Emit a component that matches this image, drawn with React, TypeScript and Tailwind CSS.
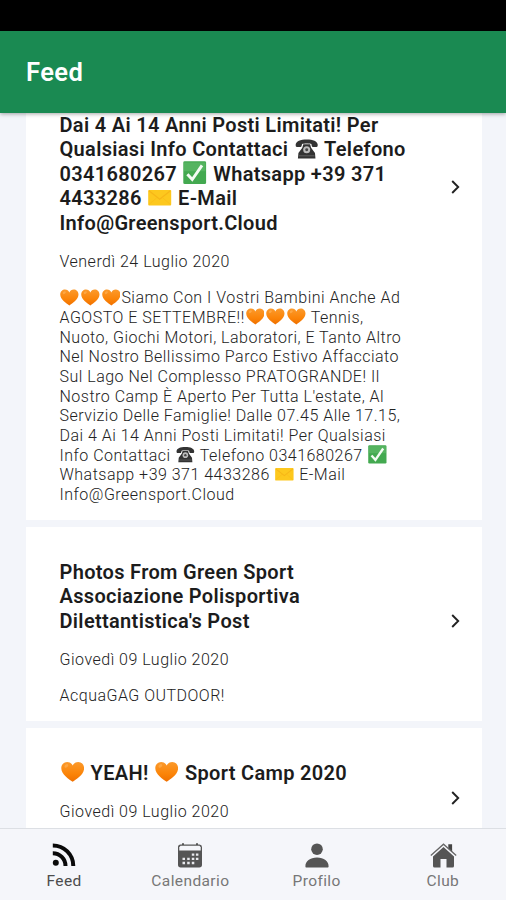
import type { ReactNode } from 'react';

const Heart = () => (
  <svg viewBox="0 0 24 24" className="inline-block w-[1.17em] h-[1.17em] mx-[0.06em] -my-[0.2em] align-baseline">
    <defs>
      <linearGradient id="heart" x1="0" y1="0" x2="0" y2="1">
        <stop offset="0" stopColor="#fb9a2c" />
        <stop offset="0.6" stopColor="#fb8408" />
        <stop offset="1" stopColor="#ef7000" />
      </linearGradient>
    </defs>
    <path fill="url(#heart)" d="M12 22.4C8 19.400.3 14.800.3 8.400.3 4.600 3.200 2 6.400 2c2.600 0 4.700 1.500 5.600 3.700C12.900 3.500 15 2 17.600 2c3.200 0 6.100 2.600 6.100 6.400 0 6.400-7.700 11-11.700 14z" />
    <ellipse cx="5.500" cy="6" rx="2.200" ry="1.500" transform="rotate(-40 5.500 6)" fill="#ffb45c" opacity="0.6" />
  </svg>
);

const Check = () => (
  <svg viewBox="0 0 24 24" className="inline-block w-[1.17em] h-[1.17em] mx-[0.06em] -my-[0.2em] align-baseline">
    <rect x="0.300" y="0.300" width="23.400" height="23.400" rx="1.500" fill="#43a950" />
    <path d="M1 1.500h22v9H1z" fill="#62bd6b" opacity="0.6" />
    <path d="M4.500 13.500l5 5.500L19.500 4.500" fill="none" stroke="#f4fbf4" strokeWidth="3" />
  </svg>
);

const Mail = () => (
  <svg viewBox="0 0 24 24" className="inline-block w-[1.17em] h-[1.17em] mx-[0.06em] -my-[0.2em] align-baseline">
    <rect x="0.200" y="4" width="23.600" height="16" rx="1" fill="#fdc81e" />
    <path d="M1 5l11 8.500L23 5" fill="none" stroke="#f7b618" strokeWidth="1.300" />
    <path d="M1 19l8-7M23 19l-8-7" fill="none" stroke="#fabd18" strokeWidth="0.800" />
  </svg>
);

const Phone = () => (
  <svg viewBox="0 0 24 24" className="inline-block w-[1.17em] h-[1.17em] mx-[0.06em] -my-[0.2em] align-baseline">
    <path fill="#333" d="M12 2.500c6.500 0 11 2 11.300 5.200.1 1.700-.3 2.600-1.300 2.600h-3.600c-1.200 0-1.300-1.500-1.600-3C15 6.500 9 6.500 7.200 7.300c-.3 1.500-.4 3-1.600 3H2C1 10.300.6 9.400.7 7.700 1 4.500 5.500 2.500 12 2.500z" />
    <path fill="#333" d="M8.500 7.500h7l1 3.500 4 5.500.5 5.500H3l.5-5.500 4-5.500z" />
    <circle cx="12" cy="13" r="3.600" fill="#bbb" />
    <circle cx="12" cy="13" r="1.500" fill="#444" />
    <path d="M4 19.300h16" stroke="#777" strokeWidth="0.700" />
  </svg>
);

type Post = { title: ReactNode[]; date: string; body: ReactNode[]; className: string };

const posts: Post[] = [
  {
    className: '-mt-[253px] pt-[253px]',
    title: [
      'Dai 4 Ai 14 Anni Posti Limitati! Per',
      <>Qualsiasi Info Contattaci <Phone /> Telefono</>,
      <>0341680267 <Check /> Whatsapp +39 371</>,
      <>4433286 <Mail /> E-Mail</>,
      'Info@Greensport.Cloud',
    ],
    date: 'Venerdì 24 Luglio 2020',
    body: [
      <><Heart /><Heart /><Heart />Siamo Con I Vostri Bambini Anche Ad</>,
      <>AGOSTO E SETTEMBRE!!<Heart /><Heart /><Heart /> Tennis,</>,
      'Nuoto, Giochi Motori, Laboratori, E Tanto Altro',
      'Nel Nostro Bellissimo Parco Estivo Affacciato',
      'Sul Lago Nel Complesso PRATOGRANDE! Il',
      "Nostro Camp È Aperto Per Tutta L'estate, Al",
      'Servizio Delle Famiglie! Dalle 07.45 Alle 17.15,',
      'Dai 4 Ai 14 Anni Posti Limitati! Per Qualsiasi',
      <>Info Contattaci <Phone /> Telefono 0341680267 <Check /></>,
      <>Whatsapp +39 371 4433286 <Mail /> E-Mail</>,
      'Info@Greensport.Cloud',
    ],
  },
  {
    className: 'pt-[33px]',
    title: ['Photos From Green Sport', 'Associazione Polisportiva', "Dilettantistica's Post"],
    date: 'Giovedì 09 Luglio 2020',
    body: ['AcquaGAG OUTDOOR!'],
  },
  {
    className: 'pt-[33px]',
    title: [<><Heart /> YEAH! <Heart /> Sport Camp 2020</>],
    date: 'Giovedì 09 Luglio 2020',
    body: [''],
  },
];

const PostCard = ({ post }: { post: Post }) => (
  <article className={`relative shrink-0 bg-white pl-[33.5px] pb-[15.5px] ${post.className}`}>
    <h2 className="text-[20px] leading-[24.4px] font-semibold tracking-[0.32px] text-[#1c1c1c]">
      {post.title.map((line, i) => (
        <span key={i} className="block h-[24.4px] whitespace-nowrap">{line}</span>
      ))}
    </h2>
    <p className="mt-[17px] text-[16px] leading-[19.7px] font-light tracking-[0.5px] text-[#222]">{post.date}</p>
    <p className="mt-[16.5px] text-[16px] leading-[19.7px] font-light tracking-[0.49px] text-[#222]">
      {post.body.map((line, i) => (
        <span key={i} className="block h-[19.7px] whitespace-nowrap">{line}</span>
      ))}
    </p>
    <svg viewBox="0 0 9 14" className="absolute right-[22px] top-1/2 -mt-[10px] w-[9px] h-[14px]">
      <path d="M1.200 1l6 6-6 6" fill="none" stroke="#222" strokeWidth="1.900" />
    </svg>
  </article>
);

const FeedIcon = () => (
  <svg viewBox="0 0 24 24" className="w-6 h-6">
    <circle cx="3.800" cy="19.700" r="3" fill="#0a0a0a" />
    <path d="M.8 10.200A12.700 12.700 0 0 1 13.500 22.900M.8 2.400A20.500 20.500 0 0 1 21.300 22.900" fill="none" stroke="#0a0a0a" strokeWidth="4" />
  </svg>
);

const CalendarIcon = () => (
  <svg viewBox="0 0 26 25" className="w-[26px] h-[25px]">
    <path fill="#555" d="M3.500 1.500H5V.3h2v1.200h12V.3h2v1.200h1.500A2.700 2.700 0 0 1 25 4.200v17.600a2.700 2.700 0 0 1-2.700 2.700H3.700A2.700 2.700 0 0 1 1 21.800V4.200c0-1.600 1-2.700 2.500-2.700z" />
    <path d="M3.500 2.800h19l1.200 1.500v3.200H2.300V4.300z" fill="#f5f6fa" />
    <path d="M14.800 11.600h2.500M18.900 11.600h2.500M5.500 15.800H8M10.200 15.800h2.500M14.800 15.800h2.500M18.900 15.800h2.500M5.500 20H8M10.200 20h2.500M14.800 20h2.500" stroke="#e9eaee" strokeWidth="2.300" />
  </svg>
);

const ProfileIcon = () => (
  <svg viewBox="0 0 24 25" className="w-6 h-[25px]">
    <circle cx="12" cy="6.200" r="5.800" fill="#555" />
    <path d="M.4 23.200c0-5 4.600-8.600 11.600-8.600s11.600 3.600 11.600 8.600c0 .9-.3 1.300-1.100 1.300h-21c-.8 0-1.100-.4-1.100-1.300z" fill="#555" />
  </svg>
);

const HomeIcon = () => (
  <svg viewBox="0 0 27 25" className="ml-0.5 w-[27px] h-[25px]">
    <path d="M18.300 1.300h3.800v8l-3.800-3.500z" fill="#444" />
    <path d="M.8 12.400L13.500 1.200l12.700 11.200" fill="none" stroke="#666" strokeWidth="1.300" />
    <path d="M13.500 4L24 13.400V23a1.500 1.500 0 0 1-1.500 1.500H16.500V16h-6v8.500H4.500A1.500 1.500 0 0 1 3 23v-9.600z" fill="#555" />
  </svg>
);

const tabs = [
  { label: 'Feed', icon: FeedIcon, color: 'text-[#4c4c4c]' },
  { label: 'Calendario', icon: CalendarIcon, color: 'text-[#777]' },
  { label: 'Profilo', icon: ProfileIcon, color: 'text-[#777]' },
  { label: 'Club', icon: HomeIcon, color: 'text-[#777]' },
];

export default function App() {
  return (
    <div className="flex h-[900px] w-[506px] flex-col overflow-hidden bg-[#f3f5fa]" style={{ fontFamily: 'Roboto, sans-serif' }}>
      <div className="h-[31px] shrink-0 bg-black" />
      <header className="relative z-10 flex h-[82px] shrink-0 items-center bg-[#1a8a52] pl-[26px] shadow-[0_1px_4px_rgba(0,0,0,0.35)]">
        <h1 className="text-[25.5px] font-semibold tracking-[0.4px] text-white">Feed</h1>
      </header>
      <main className="flex min-h-0 flex-1 flex-col gap-[6.500px] overflow-hidden pl-[26px] pr-6">
        {posts.map((post, i) => <PostCard key={i} post={post} />)}
      </main>
      <nav className="relative z-10 grid h-[72px] shrink-0 grid-cols-4 border-t border-[#dcdfe4] bg-[#f5f6fa] pl-px">
        {tabs.map((tab) => (
          <div key={tab.label} className="flex flex-col items-center pt-[13px]">
            <div className="flex h-[26px] items-center"><tab.icon /></div>
            <span className={`mt-[3px] text-[15.500px] leading-5 tracking-[0.4px] ${tab.color}`}>{tab.label}</span>
          </div>
        ))}
      </nav>
    </div>
  );
}
